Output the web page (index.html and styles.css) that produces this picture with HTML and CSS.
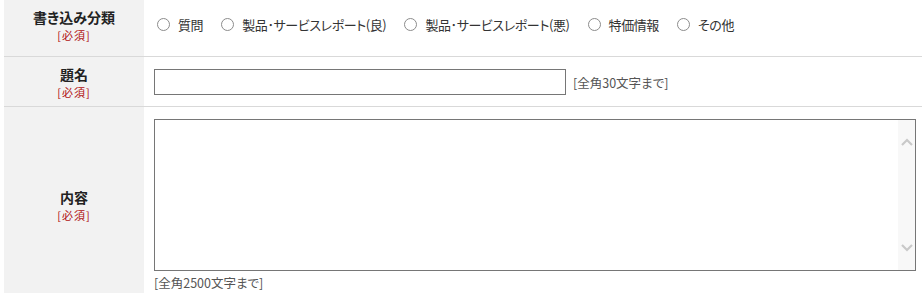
FILE: index.html
```html
<!DOCTYPE html>
<html lang="ja">
<head>
<meta charset="utf-8">
<title>書き込みフォーム</title>
<link rel="stylesheet" href="styles.css">
</head>
<body>
<div class="form">
  <div class="row row-cat">
    <div class="label"><span class="name">書き込み分類</span><span class="req">[必須]</span></div>
    <div class="field radios">
      <label class="radio"><span class="dot"></span><span class="txt">質問</span></label>
      <label class="radio"><span class="dot"></span><span class="txt">製品･サービスレポート(良)</span></label>
      <label class="radio"><span class="dot"></span><span class="txt">製品･サービスレポート(悪)</span></label>
      <label class="radio"><span class="dot"></span><span class="txt">特価情報</span></label>
      <label class="radio"><span class="dot"></span><span class="txt">その他</span></label>
    </div>
  </div>
  <div class="row row-title">
    <div class="label"><span class="name">題名</span><span class="req">[必須]</span></div>
    <div class="field inline">
      <input class="text" type="text">
      <span class="note">[全角30文字まで]</span>
    </div>
  </div>
  <div class="row row-body">
    <div class="label"><span class="name">内容</span><span class="req">[必須]</span></div>
    <div class="field stack">
      <div class="area-wrap">
        <textarea class="area"></textarea>
        <div class="sbar">
          <svg class="chev up" width="12" height="8" viewBox="0 0 12 8"><path d="M1 7 L6 2 L11 7" fill="none" stroke="#c9c9c9" stroke-width="2.2"/></svg>
          <svg class="chev down" width="12" height="8" viewBox="0 0 12 8"><path d="M1 1 L6 6 L11 1" fill="none" stroke="#c9c9c9" stroke-width="2.2"/></svg>
        </div>
      </div>
      <span class="note note-below">[全角2500文字まで]</span>
    </div>
  </div>
</div>
</body>
</html>
```

FILE: styles.css
```css
body {
  margin: 0;
  font-family: "Noto Sans CJK JP", "Noto Sans", sans-serif;
  color: #333;
  background: #fff;
}

.form {
  margin-left: 4px;
}

.row {
  display: grid;
  grid-template-columns: 140px 1fr;
  border-bottom: 1px solid #d9d9d9;
}

.label {
  background: #f2f2f2;
  display: flex;
  flex-direction: column;
  align-items: center;
  justify-content: center;
}

.name {
  font-size: 14px;
  font-weight: bold;
  line-height: 20px;
  color: #222;
  font-feature-settings: "palt";
}

.req {
  font-size: 11px;
  line-height: 16px;
  letter-spacing: 1px;
  color: #b01010;
}

.field {
  padding-left: 10px;
  font-size: 13px;
}

/* row 1 */
.row-cat {
  height: 56px;
}
.row-cat .label,
.row-cat .field {
  padding-bottom: 7px;
}
.radios {
  display: flex;
  align-items: center;
}
.radio {
  display: flex;
  align-items: center;
  margin-right: 15px;
}
.dot {
  width: 11px;
  height: 11px;
  border: 1px solid #8c8c8c;
  border-radius: 50%;
  margin: 0 8px 0 3px;
  background: #fff;
}
.txt {
  line-height: 16px;
  letter-spacing: -0.4px;
  font-feature-settings: "palt";
  color: #333;
}

/* row 2 */
.row-title .field {
  padding-top: 12px;
  padding-bottom: 11px;
}
.inline {
  display: flex;
  align-items: center;
}
.text {
  box-sizing: border-box;
  width: 412px;
  height: 26px;
  border: 1px solid #767676;
  margin: 0;
  padding: 0 4px;
  font: inherit;
}
.note {
  font-size: 12.5px;
  line-height: 17px;
  color: #555;
  margin-left: 7px;
  font-feature-settings: "palt";
}

/* row 3 */
.row-body .field {
  padding-top: 12px;
  padding-bottom: 12px;
}
.stack {
  display: flex;
  flex-direction: column;
  align-items: flex-start;
}
.area-wrap {
  position: relative;
  width: 762px;
  height: 152px;
}
.area {
  box-sizing: border-box;
  display: block;
  width: 762px;
  height: 152px;
  border: 1px solid #767676;
  margin: 0;
  padding: 2px;
  resize: none;
  overflow: hidden;
  font: inherit;
}
.sbar {
  position: absolute;
  top: 1px;
  right: 1px;
  bottom: 1px;
  width: 17px;
  background: #f8f8f8;
}
.chev {
  position: absolute;
  left: 3px;
}
.chev.up {
  top: 18px;
}
.chev.down {
  top: 124px;
}
.note-below {
  margin-left: 0;
  margin-top: 3px;
}
```
